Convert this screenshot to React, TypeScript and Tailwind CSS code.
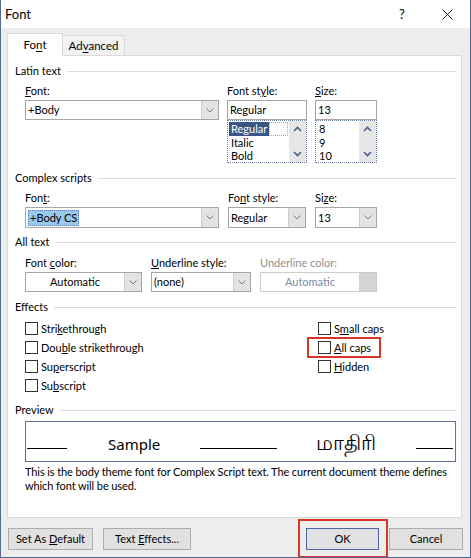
import type { ReactNode } from "react";

function Chevron({ color = "#7a7a7a" }: { color?: string }) {
  return (
    <svg width="8" height="5" viewBox="0 0 8 5">
      <path d="M0.5 0.5L4 4L7.5 0.5" fill="none" stroke={color} strokeWidth="1" />
    </svg>
  );
}

function ScrollArrow({ up }: { up?: boolean }) {
  return (
    <svg width="9" height="6" viewBox="0 0 9 6">
      <path
        d={up ? "M1 5L4.5 1.5L8 5" : "M1 1L4.5 4.5L8 1"}
        fill="none"
        stroke="#4c5f86"
        strokeWidth="1.6"
      />
    </svg>
  );
}

function GroupHeader({ children, className = "" }: { children: ReactNode; className?: string }) {
  return (
    <div className={`flex items-center h-[16px] pl-[7px] pr-[5px] ${className}`}>
      <span>{children}</span>
      <div className="flex-1 h-px bg-[#dcdcdc] ml-[6px]" />
    </div>
  );
}

function Combo({
  children,
  className = "",
  disabled,
  center,
}: {
  children: ReactNode;
  className?: string;
  disabled?: boolean;
  center?: boolean;
}) {
  return (
    <div
      className={`flex bg-white border ${disabled ? "border-[#cccccc]" : "border-[#a6a6a6]"} ${className}`}
    >
      <div
        className={`flex-1 flex items-center px-[2px] ${center ? "justify-center" : ""} ${disabled ? "text-[#7d8aa3]" : ""}`}
      >
        {children}
      </div>
      <div
        className={`w-[17px] flex items-center justify-center ${disabled ? "bg-[#d4d4d4]" : "bg-[#e3e3e3] border-l border-[#cfcfcf]"}`}
      >
        {!disabled && <Chevron />}
      </div>
    </div>
  );
}

function ListBox({ items, className = "" }: { items: string[]; className?: string }) {
  return (
    <div className={`h-[43px] flex border border-dotted border-[#6f80a6] bg-white overflow-hidden ${className}`}>
      <div className="flex-1 pt-[1px] pl-[1px] leading-[13px]">
        {items.map((it, i) => (
          <div key={it} className="flex h-[13.5px]">
            {i === 0 && it === "Regular" ? (
              <>
                <span className="bg-[#3a5686] text-white px-[2px]">{it}</span>
                <span className="flex-1 border border-dotted border-[#9aa8c6] mr-[1px]" />
              </>
            ) : (
              <span className="px-[2px]">{it}</span>
            )}
          </div>
        ))}
      </div>
      <div className="w-[17px] bg-[#e6e6e6] flex flex-col items-center justify-between py-[5px]">
        <ScrollArrow up />
        <ScrollArrow />
      </div>
    </div>
  );
}

function Check({ children }: { children: ReactNode }) {
  return (
    <div className="flex items-center h-[19px]">
      <div className="w-[13px] h-[13px] border border-[#333333] bg-white" />
      <span className="ml-[3px]">{children}</span>
    </div>
  );
}

function Button({ children, className = "" }: { children: ReactNode; className?: string }) {
  return (
    <div
      className={`h-[22px] flex items-center justify-center bg-[#e1e1e1] border ${className}`}
    >
      <span>{children}</span>
    </div>
  );
}

export default function App() {
  return (
    <div className="w-[471px] h-[558px] bg-[#ededed] border-x border-b border-[#56688f] flex flex-col text-[11px] leading-[16px] text-black font-['Lato','Noto_Sans',sans-serif] overflow-hidden">
      {/* title bar */}
      <div className="h-[28px] bg-white flex items-center shrink-0">
        <span className="pl-[4px] text-[13px]">Font</span>
        <span className="ml-auto w-[16px] text-center text-[13px]">?</span>
        <svg className="ml-[32px] mr-[17px]" width="11" height="11" viewBox="0 0 11 11">
          <path d="M0.5 0.5L10.5 10.5M10.5 0.5L0.5 10.5" stroke="#222" strokeWidth="1" />
        </svg>
      </div>

      {/* tabs */}
      <div className="mt-[5px] h-[22px] flex items-end pl-[6px] shrink-0 text-[11.5px]">
        <div className="relative z-10 -mb-px w-[56px] h-[23px] bg-white border-t border-x border-[#d9d9d9] flex items-center justify-center">
          <span>
            Fo<u className="underline-offset-2">n</u>t
          </span>
        </div>
        <div className="w-[62px] h-[20px] bg-[#f2f2f2] border-t border-r border-[#d9d9d9] flex items-center justify-center">
          <span>
            Ad<u className="underline-offset-2">v</u>anced
          </span>
        </div>
      </div>

      {/* panel */}
      <div className="ml-[6px] w-[455px] h-[463px] bg-white border border-[#d9d9d9] shrink-0">
        <GroupHeader className="mt-[7px]">Latin text</GroupHeader>
        <div className="mt-[3px] pl-[17px] flex gap-[8px]">
          <div className="w-[194px]">
            <div className="h-[18px] pt-[1px]">
              <u>F</u>ont:
            </div>
            <Combo className="h-[20px]">+Body</Combo>
          </div>
          <div className="w-[80px]">
            <div className="h-[18px] pt-[1px]">
              Font st<u>y</u>le:
            </div>
            <div className="h-[20px] border border-[#a6a6a6] bg-white flex items-center px-[2px]">Regular</div>
            <ListBox items={["Regular", "Italic", "Bold"]} />
          </div>
          <div className="w-[62px]">
            <div className="h-[18px] pt-[1px]">
              <u>S</u>ize:
            </div>
            <div className="h-[20px] border border-[#a6a6a6] bg-white flex items-center px-[2px]">13</div>
            <ListBox items={["8", "9", "10"]} />
          </div>
        </div>

        <GroupHeader className="mt-[7px]">Complex scripts</GroupHeader>
        <div className="mt-[3px] pl-[17px] flex gap-[9px]">
          <div className="w-[194px]">
            <div className="h-[18px] pt-[1px]">
              Fon<u>t</u>:
            </div>
            <Combo className="h-[21px]">
              <span className="bg-[#99c9ef] border border-dotted border-[#5a7ab0] px-[1px] leading-[14px]">+Body CS</span>
            </Combo>
          </div>
          <div className="w-[78px]">
            <div className="h-[18px] pt-[1px]">
              Fo<u>n</u>t style:
            </div>
            <Combo className="h-[21px]">Regular</Combo>
          </div>
          <div className="w-[62px]">
            <div className="h-[18px] pt-[1px]">
              Si<u>z</u>e:
            </div>
            <Combo className="h-[21px]">13</Combo>
          </div>
        </div>

        <GroupHeader className="mt-[6px]">All text</GroupHeader>
        <div className="mt-[4px] pl-[17px] flex gap-[9px]">
          <div className="w-[117px]">
            <div className="h-[18px] pt-[1px]">
              Font <u>c</u>olor:
            </div>
            <Combo className="h-[20px]" center>
              Automatic
            </Combo>
          </div>
          <div className="w-[100px]">
            <div className="h-[18px] pt-[1px]">
              <u>U</u>nderline style:
            </div>
            <Combo className="h-[20px]">(none)</Combo>
          </div>
          <div className="w-[117px]">
            <div className="h-[18px] pt-[1px] text-[#8f8f8f]">Underline color:</div>
            <Combo className="h-[20px]" center disabled>
              Automatic
            </Combo>
          </div>
        </div>

        <GroupHeader className="mt-[7px]">Effects</GroupHeader>
        <div className="mt-[4px] pl-[17px] flex">
          <div className="w-[293px]">
            <Check>
              Stri<u>k</u>ethrough
            </Check>
            <Check>
              Dou<u>b</u>le strikethrough
            </Check>
            <Check>
              Su<u>p</u>erscript
            </Check>
            <Check>
              Su<u>b</u>script
            </Check>
          </div>
          <div>
            <Check>
              S<u>m</u>all caps
            </Check>
            <div className="relative">
              <Check>
                <u>A</u>ll caps
              </Check>
              <div className="absolute left-[-11px] top-[-1px] w-[74px] h-[21px] border-2 border-[#d7372b] pointer-events-none" />
            </div>
            <Check>
              <u>H</u>idden
            </Check>
          </div>
        </div>

        <GroupHeader className="mt-[7px]">Preview</GroupHeader>
        <div className="mt-[3px] ml-[17px] w-[431px] h-[41px] border border-[#5f7098] bg-white flex items-end pb-[12px] font-['Noto_Sans',sans-serif] text-[15px] leading-[18px]">
          <div className="ml-[1px] w-[40px] border-b border-black" />
          <div className="ml-[41px] w-[51px] text-center -mb-[4px] whitespace-nowrap">Sample</div>
          <div className="ml-[41px] w-[77px] border-b border-black" />
          <div className="ml-[38px] w-[62px] text-center -mb-[5px] whitespace-nowrap text-[21px] leading-[24px]">மாதிரி</div>
          <div className="ml-[39px] w-[37px] border-b border-black" />
        </div>
        <div className="mt-[3px] ml-[17px] leading-[14px] whitespace-nowrap tracking-[-0.1px]">
          This is the body theme font for Complex Script text. The current document theme defines
          <br />
          which font will be used.
        </div>
      </div>

      {/* buttons */}
      <div className="mt-[10px] flex shrink-0">
        <Button className="ml-[7px] w-[85px] border-[#adadad]">
          Set As <u>D</u>efault
        </Button>
        <Button className="ml-[10px] w-[88px] border-[#adadad]">
          Text <u>E</u>ffects...
        </Button>
        <div className="relative ml-auto">
          <Button className="w-[73px] border-[#4a64a0]">OK</Button>
          <div className="absolute left-[-8px] top-[-9px] right-[-9px] bottom-[-8px] border-2 border-[#d7372b] pointer-events-none" />
        </div>
        <Button className="ml-[10px] mr-[7px] w-[74px] border-[#adadad]">Cancel</Button>
      </div>
    </div>
  );
}
